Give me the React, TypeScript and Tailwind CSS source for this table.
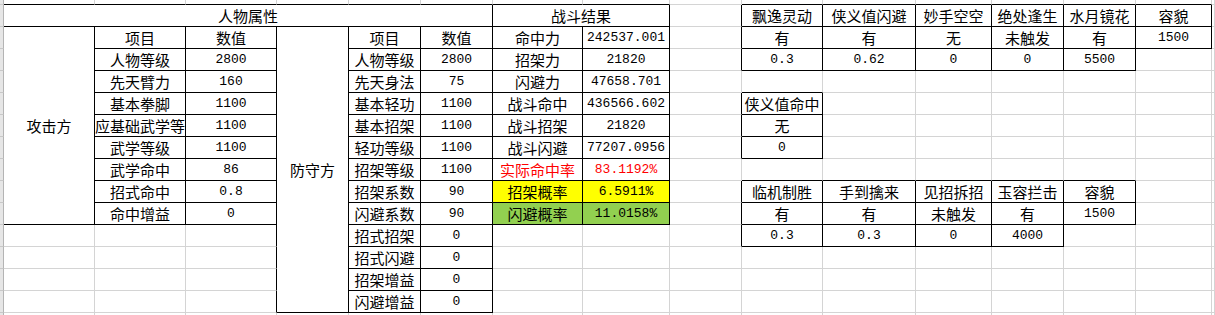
import React from 'react';

type Cell = { r: number; c: number; rs?: number; cs?: number; t: string; cls?: string };

// column widths (first = row header strip, last = partial column)
const COLS = [
  'w-[4px]', 'w-[91px]', 'w-[91px]', 'w-[91px]', 'w-[72px]', 'w-[72px]', 'w-[72px]', 'w-[90px]',
  'w-[87px]', 'w-[72px]', 'w-[81px]', 'w-[93px]', 'w-[76px]', 'w-[72px]', 'w-[72px]', 'w-[76px]', 'w-[3px]',
];
const ROWS = [
  'h-[5px]', 'h-[22px]', 'h-[22px]', 'h-[22px]', 'h-[22px]', 'h-[22px]', 'h-[22px]', 'h-[22px]',
  'h-[22px]', 'h-[22px]', 'h-[22px]', 'h-[22px]', 'h-[22px]', 'h-[22px]', 'h-[22px]', 'h-[3px]',
];

const attack = [
  ['项目', '数值'],
  ['人物等级', '2800'],
  ['先天臂力', '160'],
  ['基本拳脚', '1100'],
  ['应基础武学等', '1100'],
  ['武学等级', '1100'],
  ['武学命中', '86'],
  ['招式命中', '0.8'],
  ['命中增益', '0'],
];

const defense = [
  ['项目', '数值'],
  ['人物等级', '2800'],
  ['先天身法', '75'],
  ['基本轻功', '1100'],
  ['基本招架', '1100'],
  ['轻功等级', '1100'],
  ['招架等级', '1100'],
  ['招架系数', '90'],
  ['闪避系数', '90'],
  ['招式招架', '0'],
  ['招式闪避', '0'],
  ['招架增益', '0'],
  ['闪避增益', '0'],
];

const result: [string, string, string?][] = [
  ['命中力', '242537.001'],
  ['招架力', '21820'],
  ['闪避力', '47658.701'],
  ['战斗命中', '436566.602'],
  ['战斗招架', '21820'],
  ['战斗闪避', '77207.0956'],
  ['实际命中率', '83.1192%', 'text-[#ff0000]'],
  ['招架概率', '6.5911%', 'text-black bg-[#ffff00]'],
  ['闪避概率', '11.0158%', 'text-black bg-[#92d050]'],
];

const cells: Cell[] = [
  { r: 1, c: 1, cs: 6, t: '人物属性' },
  { r: 1, c: 7, cs: 2, t: '战斗结果' },
  { r: 2, c: 1, rs: 9, t: '攻击方' },
  { r: 2, c: 4, rs: 13, t: '防守方' },
];

attack.forEach(([a, b], i) => {
  cells.push({ r: 2 + i, c: 2, t: a }, { r: 2 + i, c: 3, t: b });
});
defense.forEach(([a, b], i) => {
  cells.push({ r: 2 + i, c: 5, t: a }, { r: 2 + i, c: 6, t: b });
});
result.forEach(([a, b, cls], i) => {
  cells.push({ r: 2 + i, c: 7, t: a, cls }, { r: 2 + i, c: 8, t: b, cls });
});

const rowLines: [number, string[]][] = [
  [1, ['飘逸灵动', '侠义值闪避', '妙手空空', '绝处逢生', '水月镜花', '容貌']],
  [2, ['有', '有', '无', '未触发', '有', '1500']],
  [3, ['0.3', '0.62', '0', '0', '5500']],
  [5, ['侠义值命中']],
  [6, ['无']],
  [7, ['0']],
  [9, ['临机制胜', '手到擒来', '见招拆招', '玉容拦击', '容貌']],
  [10, ['有', '有', '未触发', '有', '1500']],
  [11, ['0.3', '0.3', '0', '4000']],
];
rowLines.forEach(([r, list]) => {
  list.forEach((t, i) => cells.push({ r, c: 10 + i, t }));
});

// owner map: which bordered cell covers each grid position
const owner: (number | null)[][] = ROWS.map(() => COLS.map(() => null));
cells.forEach((cell, idx) => {
  const rs = cell.rs ?? 1;
  const cs = cell.cs ?? 1;
  for (let r = cell.r; r < cell.r + rs; r++)
    for (let c = cell.c; c < cell.c + cs; c++) owner[r][c] = idx;
});

const bordered = (r: number, c: number) =>
  r >= 0 && r < ROWS.length && c >= 0 && c < COLS.length && owner[r][c] !== null;

const isNum = (t: string) => /^[\d.%]+$/.test(t);

export default function App() {
  return (
    <div className="w-[1215px] h-[315px] overflow-hidden bg-white">
      <table className="table-fixed border-separate border-spacing-0 w-[1215px]">
        <colgroup>
          {COLS.map((w, i) => (
            <col key={i} className={w} />
          ))}
        </colgroup>
        <tbody>
          {ROWS.map((h, r) => (
            <tr key={r} className={h}>
              {COLS.map((_, c) => {
                const own = owner[r][c];
                if (c === 0) {
                  return (
                    <td
                      key={c}
                      className={`${h} p-0 bg-[#e6e6e6] border-r border-b border-r-[#b4b4b4] border-b-[#c8c8c8]`}
                    />
                  );
                }
                let cell: Cell | null = null;
                if (own !== null) {
                  cell = cells[own];
                  if (cell.r !== r || cell.c !== c) return null;
                }
                const rs = cell?.rs ?? 1;
                const cs = cell?.cs ?? 1;
                let right = !!cell;
                let bottom = !!cell;
                for (let i = r; i < r + rs; i++) if (bordered(i, c + cs)) right = true;
                for (let j = c; j < c + cs; j++) if (bordered(r + rs, j)) bottom = true;
                const t = cell?.t ?? '';
                return (
                  <td
                    key={c}
                    rowSpan={rs}
                    colSpan={cs}
                    className={`p-0 overflow-hidden whitespace-nowrap text-center align-middle border-r border-b ${
                      right ? 'border-r-black' : 'border-r-[#d4d4d4]'
                    } ${bottom ? 'border-b-black' : 'border-b-[#d4d4d4]'} ${
                      isNum(t)
                        ? "font-['Liberation_Mono',monospace] text-[13px] leading-[18px] pt-[1px]"
                        : "font-['Noto_Sans_CJK_SC',sans-serif] text-[15px] leading-[18px]"
                    } ${cell?.cls ?? 'text-black'}`}
                  >
                    {t}
                  </td>
                );
              })}
            </tr>
          ))}
        </tbody>
      </table>
    </div>
  );
}
